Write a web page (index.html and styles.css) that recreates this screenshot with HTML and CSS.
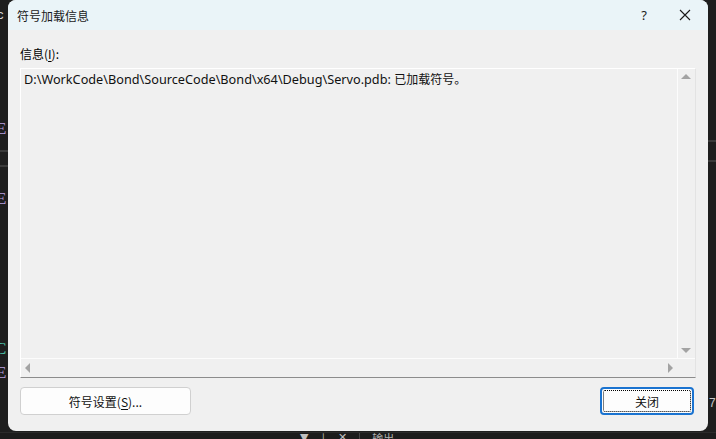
FILE: index.html
```html
<!DOCTYPE html>
<html lang="zh-CN">
<head>
<meta charset="utf-8">
<title>符号加载信息</title>
<link rel="stylesheet" href="styles.css">
</head>
<body>
<div class="screen">
  <div class="main">
    <div class="side side-left">
      <span class="frag f1">c</span>
      <span class="frag f2">E</span>
      <span class="bar b1"></span>
      <span class="bar b2"></span>
      <span class="frag f3">E</span>
      <span class="frag f4">C</span>
      <span class="frag f5">E</span>
    </div>
    <div class="dialog">
      <div class="titlebar">
        <span class="title">符号加载信息</span>
        <span class="help">?</span>
        <svg class="close" width="12" height="12" viewBox="0 0 12 12"><path d="M1 1 L11 11 M11 1 L1 11" stroke="#1a1a1a" stroke-width="1.1" fill="none"/></svg>
      </div>
      <div class="content">
        <div class="label">信息(<u>I</u>):</div>
        <div class="textbox">
          <div class="textrow">
            <div class="textarea">D:\WorkCode\Bond\SourceCode\Bond\x64\Debug\Servo.pdb: <span class="cjk">已加载符号。</span></div>
            <div class="vscroll">
              <span class="arrow up"></span>
              <span class="arrow down"></span>
            </div>
          </div>
          <div class="hrow">
            <div class="hscroll">
              <span class="arrow left"></span>
              <span class="arrow right"></span>
            </div>
            <div class="corner"></div>
          </div>
        </div>
        <div class="buttons">
          <button class="btn settings">符号设置(<u>S</u>)...</button>
          <button class="btn primary"><span class="focus">关闭</span></button>
        </div>
      </div>
    </div>
    <div class="side side-right">
      <span class="bar r1"></span>
      <span class="bar r2"></span>
      <span class="frag f6">7</span>
    </div>
  </div>
  <div class="bottom">
    <span class="tool">▼</span><span class="tool">⊥</span><span class="tool">✕</span><span class="sep"></span><span class="tool out">输出</span>
  </div>
</div>
</body>
</html>
```
FILE: styles.css
```css
* { box-sizing: border-box; }
html, body { margin: 0; padding: 0; }
body {
  width: 716px;
  height: 439px;
  overflow: hidden;
  background: #1f1f1f;
  font-family: "Noto Sans", "Noto Sans CJK SC", sans-serif;
  font-size: 12px;
  color: #000;
}
.screen { display: flex; flex-direction: column; width: 716px; height: 439px; }
.main { display: flex; height: 432px; }
.side { position: relative; width: 8px; overflow: hidden; background: #1e1e1e; }
.side-right { flex: 1; }
.frag { position: absolute; font-family: "Liberation Serif", serif; font-size: 17px; line-height: 1; }
.f1 { top: 8px; left: -3px; color: #d4d4d4; font-family: "Liberation Sans", sans-serif; font-size: 13px; }
.f2 { top: 120px; left: -4px; color: #b8a0e0; }
.f3 { top: 190px; left: -4px; color: #b8a0e0; }
.f4 { top: 340px; left: -5px; color: #4ec9b0; }
.f5 { top: 364px; left: -4px; color: #b8a0e0; }
.f6 { top: 397px; left: 1px; color: #c8c8c8; font-family: "Liberation Sans", sans-serif; font-size: 12px; }
.bar { position: absolute; left: 0; width: 100%; height: 2px; background: #3a3a3a; }
.b1 { top: 150px; }
.b2 { top: 165px; }
.r1 { top: 140px; }
.r2 { top: 160px; }

.dialog {
  width: 700px;
  height: 431px;
  background: #f0f0f0;
  border-radius: 8px;
  overflow: hidden;
  display: flex;
  flex-direction: column;
}
.titlebar {
  height: 30px;
  background: #eaf4f8;
  display: flex;
  align-items: center;
  padding-left: 9px;
}
.title { flex: 1; font-family: "Noto Sans CJK SC", sans-serif; font-size: 12px; color: #1a1a1a; }
.help { font-family: "Noto Sans", sans-serif; font-size: 13px; margin-right: 32px; color: #1a1a1a; }
.close { margin-right: 17px; }

.content { flex: 1; display: flex; flex-direction: column; padding: 16px 12px 0 12px; }
.label { font-family: "Noto Sans CJK SC", sans-serif; height: 22px; line-height: 16px; padding-left: 0; }
.label u { text-decoration-thickness: 1px; text-underline-offset: 2px; }
.textbox {
  height: 310px;
  width: 676px;
  border: 1px solid #ffffff;
  border-right-color: #e3e3e3;
  border-bottom-color: #8c8c8c;
  display: flex;
  flex-direction: column;
}
.textrow { flex: 1; display: flex; }
.textarea { flex: 1; padding: 1px 0 0 3px; line-height: 18px; white-space: nowrap; color: #111; font-size: 12.7px; }
.cjk { font-family: "Noto Sans CJK SC", sans-serif; font-size: 12px; }
.vscroll { width: 18px; border-left: 1px solid #fcfcfc; position: relative; }
.hrow { height: 19px; display: flex; border-top: 1px solid #fcfcfc; }
.hscroll { flex: 1; position: relative; }
.corner { width: 18px; }
.arrow { position: absolute; width: 0; height: 0; border: 5px solid transparent; }
.up { top: 5px; left: 3px; border-bottom-color: #a3a3a3; border-top-width: 0; }
.down { bottom: 5px; left: 3px; border-top-color: #a3a3a3; border-bottom-width: 0; }
.left { top: 4px; left: 4px; border-right-color: #a3a3a3; border-left-width: 0; }
.right { top: 4px; right: 4px; border-left-color: #a3a3a3; border-right-width: 0; }

.buttons { display: flex; justify-content: space-between; padding-top: 9px; padding-right: 2px; }
.btn {
  height: 28px;
  font-family: "Noto Sans CJK SC", sans-serif;
  font-size: 12px;
  color: #111;
  background: #fdfdfd;
  border: 1px solid #d0d0d0;
  border-radius: 4px;
  padding: 0;
}
.btn u { text-decoration-thickness: 1px; text-underline-offset: 2px; }
.settings { width: 171px; }
.primary {
  width: 94px;
  border: 2px solid #1a73d0;
  padding: 1px;
}
.focus {
  display: flex;
  align-items: center;
  justify-content: center;
  height: 100%;
  border: 1px dotted #000;
  border-radius: 2px;
}
.bottom {
  height: 7px;
  background: #1c1c1c;
  overflow: hidden;
  display: flex;
  align-items: flex-start;
  padding-left: 300px;
  color: #c0c0c0;
  font-size: 12px;
  line-height: 10px;
  border-top: 1px solid #2b2b2b;
}
.tool { margin-right: 10px; font-family: "DejaVu Sans", sans-serif; font-size: 11px; }
.sep { width: 1px; height: 7px; background: #444; margin: 0 12px 0 2px; }
.out { font-family: "Noto Sans CJK SC", sans-serif; color: #b0b0b0; }
```
